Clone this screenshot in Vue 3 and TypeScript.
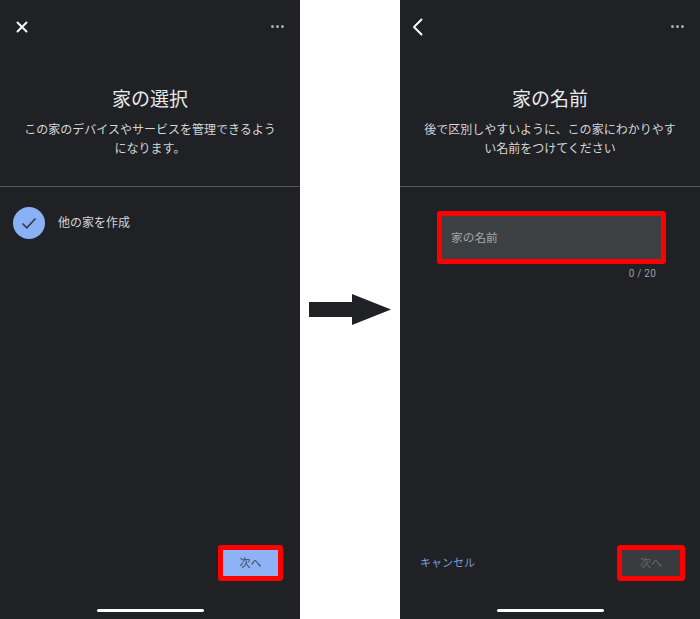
<script setup lang="ts">
const dots = [0, 1, 2]
</script>

<template>
  <div class="page">
    <section class="phone">
      <header class="head">
        <div class="topbar">
          <svg class="nav-icon" viewBox="0 0 14 14" width="14" height="14">
            <path d="M2.5 2.5 11.5 11.5M11.5 2.5 2.5 11.5" class="stroke" />
          </svg>
          <div class="dots"><i v-for="d in dots" :key="d"></i></div>
        </div>
        <h1>家の選択</h1>
        <p>この家のデバイスやサービスを管理できるようになります。</p>
      </header>
      <div class="body">
        <div class="option">
          <span class="check">
            <svg viewBox="0 0 16 14" width="16" height="14">
              <path d="M1.5 7.5 5.8 11.8 14.5 2.5" class="tick" />
            </svg>
          </span>
          <span class="option-label">他の家を作成</span>
        </div>
      </div>
      <footer class="foot end">
        <button class="next active"><span>次へ</span></button>
      </footer>
      <div class="home"></div>
    </section>

    <div class="arrow-col">
      <svg viewBox="0 0 82 31" width="82" height="31">
        <path d="M0 8H43V0L82 15.5 43 31V23H0Z" fill="#202125" />
      </svg>
    </div>

    <section class="phone">
      <header class="head">
        <div class="topbar">
          <svg class="nav-icon back" viewBox="0 0 12 18" width="12" height="18">
            <path d="M9.5 1.5 2 9 9.5 16.5" class="stroke" />
          </svg>
          <div class="dots"><i v-for="d in dots" :key="d"></i></div>
        </div>
        <h1>家の名前</h1>
        <p>後で区別しやすいように、この家にわかりやすい名前をつけてください</p>
      </header>
      <div class="body form">
        <div class="field"><span>家の名前</span></div>
        <div class="count">0 / 20</div>
      </div>
      <footer class="foot between">
        <span class="cancel">キャンセル</span>
        <button class="next disabled"><span>次へ</span></button>
      </footer>
      <div class="home"></div>
    </section>
  </div>
</template>

<style>
html, body { margin: 0; background: #fff; }
</style>

<style scoped>
.page {
  width: 700px;
  height: 619px;
  display: flex;
  overflow: hidden;
  font-family: "Noto Sans CJK JP", "Liberation Sans", sans-serif;
}
.phone {
  width: 300px;
  height: 619px;
  flex: none;
  display: flex;
  flex-direction: column;
  background: #202125;
  color: #e8eaed;
}
.arrow-col {
  width: 100px;
  flex: none;
  display: flex;
  justify-content: center;
  align-items: flex-start;
  padding-top: 294px;
  box-sizing: border-box;
}
.head {
  height: 187px;
  box-sizing: border-box;
  border-bottom: 1px solid #54565a;
  text-align: center;
}
.topbar {
  height: 53px;
  padding: 0 16px;
  display: flex;
  justify-content: space-between;
  align-items: center;
}
.nav-icon { display: block; margin-left: -1px; }
.back { margin-left: -4px; }
.stroke { fill: none; stroke: #fff; stroke-width: 1.9; stroke-linecap: round; stroke-linejoin: round; }
.dots { display: flex; gap: 2px; }
.dots i { width: 3px; height: 3px; border-radius: 50%; background: #a9abaf; }
h1 {
  margin: 31px 0 0;
  font-size: 19px;
  font-weight: 400;
  line-height: 28px;
}
p {
  margin: 7px 0 0;
  padding: 0 24px;
  font-size: 12px;
  line-height: 19px;
  color: #d5d7da;
}
.body { flex: 1; }
.option {
  margin: 20px 0 0 13px;
  display: flex;
  align-items: center;
  gap: 13px;
  font-size: 12px;
  color: #d3d5d8;
}
.option-label { padding-bottom: 3px; }
.check {
  width: 32px;
  height: 32px;
  border-radius: 50%;
  background: #8ab0f5;
  display: flex;
  align-items: center;
  justify-content: center;
}
.tick { fill: none; stroke: #353b49; stroke-width: 1.6; }
.form { padding: 24px 34px 0 37px; }
.field {
  height: 53px;
  box-sizing: border-box;
  border: 5px solid #fe0000;
  border-radius: 3px;
  background: #3c4043;
  padding: 0 0 3px 9px;
  display: flex;
  align-items: center;
  font-size: 11.7px;
  color: #a5a7aa;
}
.count {
  margin: 3px 10px 0 0;
  text-align: right;
  font-size: 10px;
  line-height: 14px;
  letter-spacing: 0.2px;
  color: #9aa0a6;
  font-family: Roboto, sans-serif;
}
.foot {
  display: flex;
  align-items: center;
  margin-bottom: 28px;
}
.end { justify-content: flex-end; padding-right: 17px; }
.between { justify-content: space-between; padding: 0 15px 0 20px; }
.cancel { font-size: 11px; color: #7d9dd8; padding-bottom: 3px; }
.next {
  height: 36px;
  border: 5px solid #fe0000;
  border-radius: 3px;
  font: inherit;
  font-size: 11px;
  padding: 0 0 2px;
}
.active { width: 65px; background: #8fb2f6; color: #3c4658; }
.disabled { width: 68px; background: #3a3b3e; color: #66686b; }
.home {
  width: 107px;
  height: 3px;
  margin: 0 auto 7px;
  border-radius: 2px;
  background: #fff;
}
</style>
